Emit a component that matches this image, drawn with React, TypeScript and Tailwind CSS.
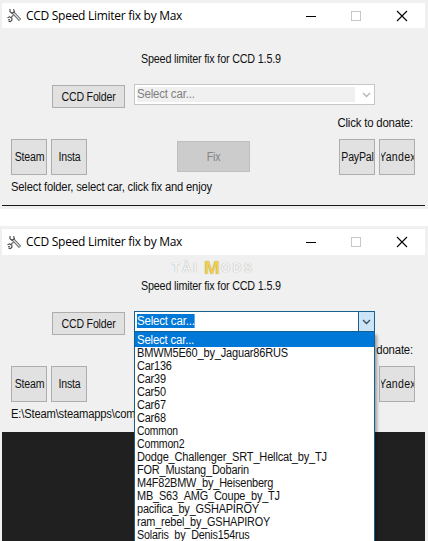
import clsx from "clsx";
import type { ReactNode } from "react";

type ButtonProps = {
  children: ReactNode;
  className?: string;
  disabled?: boolean;
};

type WindowProps = {
  status: string;
  open?: boolean;
  className?: string;
};

const cars = [
  { name: "Select car...", scale: "scale-x-[0.95]" },
  { name: "BMWM5E60_by_Jaguar86RUS", scale: "scale-x-[0.92]" },
  { name: "Car136", scale: "scale-x-[0.91]" },
  { name: "Car39", scale: "scale-x-[0.91]" },
  { name: "Car50", scale: "scale-x-[0.91]" },
  { name: "Car67", scale: "scale-x-[0.91]" },
  { name: "Car68", scale: "scale-x-[0.91]" },
  { name: "Common", scale: "scale-x-[0.86]" },
  { name: "Common2", scale: "scale-x-[0.88]" },
  { name: "Dodge_Challenger_SRT_Hellcat_by_TJ", scale: "scale-x-[0.92]" },
  { name: "FOR_Mustang_Dobarin", scale: "scale-x-[0.91]" },
  { name: "M4F82BMW_by_Heisenberg", scale: "scale-x-[0.91]" },
  { name: "MB_S63_AMG_Coupe_by_TJ", scale: "scale-x-[0.91]" },
  { name: "pacifica_by_GSHAPIROY", scale: "scale-x-[0.91]" },
  { name: "ram_rebel_by_GSHAPIROY", scale: "scale-x-[0.905]" },
  { name: "Solaris_by_Denis154rus", scale: "scale-x-[0.895]" },
];

function ToolsIcon() {
  return (
    <svg width="15" height="15" viewBox="0 0 15 15" fill="none">
      <path d="M6 4.5l7 7.5" stroke="#555" strokeWidth="3" />
      <path d="M6 4.5l6.6 7" stroke="#ddd" strokeWidth="1.4" />
      <path d="M3 1v2.7l2 1.6 2.4-1.5L6.6 1.2" stroke="#444" strokeWidth="1.1" />
      <path d="M6.5 7L4 9.5" stroke="#777" strokeWidth="1.5" />
      <path d="M.5 9.8l2-1 2.4 1.6v1.9l-1.6 1.3-1.8-.3M1 11.8h2" stroke="#444" strokeWidth="1.1" />
    </svg>
  );
}

function TitleBar({ className }: { className?: string }) {
  return (
    <div className={clsx("flex items-center bg-white pl-[5px]", className)}>
      <ToolsIcon />
      <span className="ml-[4px] w-[270px] font-['Open_Sans',sans-serif] text-[12px] leading-[16px] tracking-[-0.28px] text-black">
        CCD Speed Limiter fix by Max
      </span>
      <svg className="ml-[9px]" width="110" height="12" viewBox="0 0 110 12" fill="none" shapeRendering="crispEdges">
        <path d="M1 6.5h10" stroke="#000" />
        <rect x="46.5" y="1.5" width="9" height="9" stroke="#c8c8c8" />
        <path d="M92 1l10 10M102 1L92 11" stroke="#000" strokeWidth="1.1" shapeRendering="auto" />
      </svg>
    </div>
  );
}

function Button({ children, className, disabled }: ButtonProps) {
  return (
    <button
      className={clsx(
        "flex shrink-0 items-center justify-center whitespace-nowrap border",
        disabled ? "border-[#bfbfbf] bg-[#cccccc] text-[#858585]" : "border-[#adadad] bg-[#e1e1e1] text-[#111]",
        className
      )}
    >
      <span className="flex w-[33px] scale-x-[0.88] justify-center">{children}</span>
    </button>
  );
}

function CarSelect({ open }: { open?: boolean }) {
  return (
    <div
      className={clsx(
        "relative flex h-[21px] w-[241px] border bg-white",
        open ? "border-[#17608f]" : "border-[#c6c6c6]"
      )}
    >
      <div className={clsx("flex flex-1 py-[2px] pl-[2px]", !open && "pr-[3px]")}>
        <div className={clsx("flex flex-1", !open && "bg-[#f0f0f0]")}>
          <span
            className={clsx(
              "h-[14px] origin-left scale-x-[0.96] leading-[14px]",
              open ? "bg-[#0078d7] text-white" : "text-[#808080]"
            )}
          >
            Select car...
          </span>
        </div>
      </div>
      <div
        className={clsx(
          "flex w-[16px] items-center justify-center",
          open && "border-l border-[#17608f] bg-[#cce4f7]"
        )}
      >
        <svg width="9" height="6" viewBox="0 0 9 6" fill="none">
          <path d="M1 1l3.5 3.5L8 1" stroke={open ? "#3c4a55" : "#b4b4b4"} strokeWidth="1.3" />
        </svg>
      </div>
      {open && (
        <ul className="absolute -left-px top-[20px] z-10 h-[212px] w-[241px] border-x border-[#17608f] bg-white text-[#111] shadow-[2px_3px_3px_rgba(0,0,0,0.35)]">
          {cars.map((car, i) => (
            <li
              key={car.name}
              className={clsx(
                "flex whitespace-nowrap pl-[2px] leading-[13px]",
                i === 0 ? "h-[15px] bg-[#0078d7] pt-[2px] text-white" : "h-[13px]"
              )}
            >
              <span className={clsx("origin-left", car.scale)}>{car.name}</span>
            </li>
          ))}
        </ul>
      )}
    </div>
  );
}

function Watermark() {
  return (
    <div className="absolute left-[170px] top-[4px] flex h-[18px] items-center font-['Liberation_Sans',sans-serif] text-[13px] font-bold leading-[18px] text-[#f4f4f4] [text-shadow:0_0_1px_#999]">
      <span className="w-[32px] tracking-[2px]">TÀI</span>
      <span className="w-[17px] text-[19px] text-[#f2cf4a]">M</span>
      <span className="text-[12px] tracking-[2.5px]">ODS</span>
    </div>
  );
}

function Window({ status, open, className }: WindowProps) {
  return (
    <section className="mx-[2px] w-[423px]">
      <TitleBar className={className} />
      <div className="relative h-[177px] bg-[#f0f0f0] pt-[23px]">
        {open && <Watermark />}
        <p className="ml-[139px] origin-left scale-x-[0.897] whitespace-nowrap leading-[16px]">
          Speed limiter fix for CCD 1.5.9
        </p>
        <div className="mt-[17px] flex gap-[9px] pl-[50px]">
          <Button className="mt-px h-[23px] w-[73px]">CCD Folder</Button>
          <CarSelect open={open} />
        </div>
        <p className="mr-[12px] mt-[7px] origin-right scale-x-[0.95] text-right leading-[16px]">Click to donate:</p>
        <div className="mt-[8px] flex pl-[9px]">
          <Button className="size-[36px]">Steam</Button>
          <Button className="ml-[4px] size-[36px]">Insta</Button>
          <Button disabled className="ml-[90px] mt-[2px] h-[31px] w-[73px]">Fix</Button>
          <Button className="ml-[89px] size-[36px]">PayPal</Button>
          <Button className="ml-[4px] size-[36px]">
            <span className="flex w-[37px] shrink-0 justify-center overflow-hidden tracking-[0.3px]">Yandex</span>
          </Button>
        </div>
        <p
          className={clsx(
            "ml-[9px] mt-[4px] origin-left scale-x-[0.935] overflow-hidden whitespace-nowrap leading-[16px]",
            open && "w-[132px]"
          )}
        >
          {status}
        </p>
      </div>
    </section>
  );
}

export default function App() {
  return (
    <main className="h-[541px] w-[428px] overflow-hidden bg-[#f0f0f0] pt-[3px] font-['Liberation_Sans',sans-serif] text-[12px] tracking-[-0.2px] text-[#111]">
      <Window className="h-[25px]" status="Select folder, select car, click fix and enjoy" />
      <div className="mx-[2px] h-px w-[423px] bg-[#1a1a1a]" />
      <div className="mt-[3px] h-[17px] bg-white" />
      <div className="h-[3px]" />
      <Window open className="h-[26px]" status="E:\Steam\steamapps\com" />
      <div className="mx-[2px] h-[109px] w-[423px] bg-[#202020]" />
    </main>
  );
}
